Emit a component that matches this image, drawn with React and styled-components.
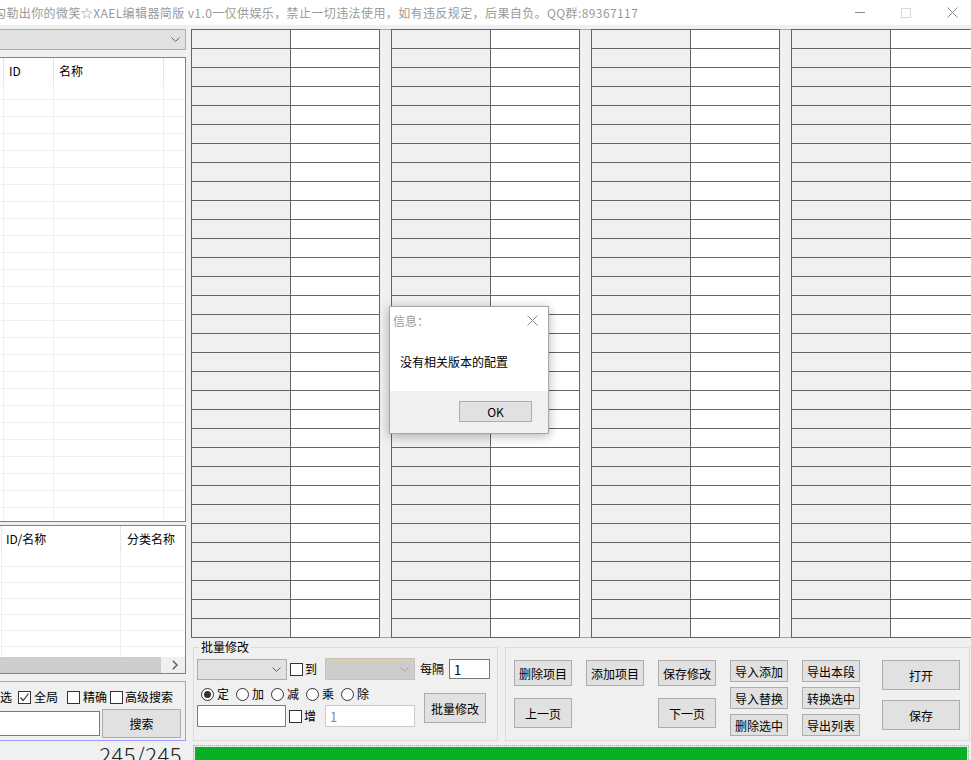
import styled, { createGlobalStyle } from 'styled-components';

const GlobalStyle = createGlobalStyle`
  html, body {
    margin: 0;
    padding: 0;
    background: #f0f0f0;
  }
  body {
    font-family: 'Noto Sans CJK SC', 'Microsoft YaHei', sans-serif;
    font-size: 12px;
    color: #000;
  }
  * { box-sizing: border-box; }
`;

const Window = styled.div`
  position: relative;
  width: 971px;
  height: 760px;
  overflow: hidden;
  background: #f0f0f0;
`;

const TitleBar = styled.div`
  height: 25px;
  background: #fff;
  display: flex;
  align-items: center;
`;

const TitleText = styled.div`
  margin-left: -6px;
  color: #9a9a9a;
  font-size: 12px;
  line-height: 25px;
  letter-spacing: 0.4px;
  white-space: nowrap;
`;

const Controls = styled.div`
  margin-left: auto;
  margin-right: -4px;
  display: flex;
`;

const CtrlBtn = styled.div`
  width: 46px;
  height: 25px;
  display: flex;
  align-items: center;
  justify-content: center;
`;

const Body = styled.div`
  display: flex;
  padding-top: 4px;
  height: 735px;
`;

const LeftCol = styled.div`
  width: 186px;
  flex-shrink: 0;
  margin-right: 5px;
  display: flex;
  flex-direction: column;
`;

const RightCol = styled.div`
  flex: 1;
  min-width: 0;
  display: flex;
  flex-direction: column;
`;

const Combo = styled.div`
  width: ${p => p.$w}px;
  height: ${p => p.$h || 21}px;
  flex-shrink: 0;
  background: ${p => (p.$disabled ? '#cccccc' : '#e1e1e1')};
  border: 1px solid ${p => (p.$disabled ? '#c4c4c4' : '#adadad')};
  ${p => p.$cut && 'border-left: none;'}
  margin-left: ${p => p.$ml || 0}px;
  display: flex;
  align-items: center;
  justify-content: flex-end;
  padding-right: 5px;
  ${p => p.$disabled && 'outline: 1px dotted #e2d3a8; outline-offset: -3px;'}
`;

const ListBox = styled.div`
  margin-top: ${p => p.$mt}px;
  height: ${p => p.$h}px;
  flex-shrink: 0;
  background: #fff;
  border: 1px solid #828282;
  border-left: none;
  overflow: hidden;
  display: flex;
  flex-direction: column;
`;

const ListHeader = styled.div`
  display: flex;
  height: ${p => p.$h}px;
  flex-shrink: 0;
`;

const HeadCell = styled.div`
  width: ${p => (p.$w ? `${p.$w}px` : 'auto')};
  flex: ${p => (p.$w ? '0 0 auto' : '1')};
  border-right: ${p => (p.$w ? '1px solid #e5e5e5' : 'none')};
  padding-left: ${p => p.$pl || 0}px;
  display: flex;
  align-items: center;
  white-space: nowrap;
  font-size: 12px;
`;

const ListRows = styled.div`
  flex: 1;
  overflow: hidden;
`;

const ListRow = styled.div`
  display: flex;
  height: ${p => p.$h}px;
  border-bottom: 1px solid #efefef;
`;

const ListCell = styled.div`
  width: ${p => (p.$w ? `${p.$w}px` : 'auto')};
  flex: ${p => (p.$w ? '0 0 auto' : '1')};
  border-right: ${p => (p.$w ? '1px solid #efefef' : 'none')};
`;

const HScroll = styled.div`
  height: 16px;
  flex-shrink: 0;
  display: flex;
  background: #f0f0f0;
`;

const Thumb = styled.div`
  flex: 1;
  background: #cdcdcd;
  outline: 1px dotted #e6d6a6;
  outline-offset: -4px;
`;

const ScrollArrow = styled.div`
  width: 24px;
  display: flex;
  align-items: center;
  justify-content: center;
  padding-left: 4px;
`;

const SearchGroup = styled.div`
  margin-top: 7px;
  height: 60px;
  flex-shrink: 0;
  border: 1px solid #9a9aff;
  border-left: none;
  padding-top: 8px;
`;

const Line = styled.div`
  display: flex;
  align-items: center;
  height: ${p => p.$h}px;
  margin-top: ${p => p.$mt || 0}px;
  padding-left: ${p => p.$pl || 0}px;
  gap: ${p => p.$gap || 0}px;
`;

const Label = styled.span`
  margin-left: ${p => p.$ml || 0}px;
  line-height: 14px;
  white-space: nowrap;
  font-size: 12px;
`;

const CheckItem = styled.label`
  display: flex;
  align-items: center;
  gap: ${p => p.$gap ?? 3}px;
  margin-left: ${p => p.$ml || 0}px;
  white-space: nowrap;
  line-height: 14px;
`;

const Box = styled.span`
  width: 13px;
  height: 13px;
  border: 1px solid #333;
  background: #fff;
  display: inline-flex;
  align-items: center;
  justify-content: center;
`;

const RadioItem = styled.label`
  display: flex;
  align-items: center;
  gap: 3px;
  line-height: 14px;
`;

const RadioCircle = styled.span`
  width: 13px;
  height: 13px;
  border: 1px solid #333;
  border-radius: 50%;
  background: #fff;
  display: inline-flex;
  align-items: center;
  justify-content: center;
  &::after {
    content: '';
    width: 7px;
    height: 7px;
    border-radius: 50%;
    background: ${p => (p.$on ? '#333' : 'transparent')};
  }
`;

const TextInput = styled.div`
  width: ${p => p.$w}px;
  height: ${p => p.$h}px;
  flex-shrink: 0;
  margin-left: ${p => p.$ml || 0}px;
  background: #fff;
  border: 1px solid ${p => (p.$disabled ? '#cccccc' : '#7a7a7a')};
  ${p => p.$cut && 'border-left: none;'}
  color: ${p => (p.$disabled ? '#8a8a8a' : '#000')};
  font-size: 13px;
  padding-left: 4px;
  display: flex;
  align-items: center;
`;

const Btn = styled.div`
  width: ${p => p.$w}px;
  height: ${p => p.$h}px;
  flex-shrink: 0;
  margin-left: ${p => p.$ml || 0}px;
  margin-top: ${p => p.$mt || 0}px;
  background: #e1e1e1;
  border: 1px solid #adadad;
  display: flex;
  align-items: center;
  justify-content: center;
  font-size: 12px;
  white-space: nowrap;
`;

const Count = styled.div`
  text-align: right;
  padding-right: 4px;
  font-size: 22px;
  font-weight: 300;
  line-height: 26px;
  color: #222;
  letter-spacing: 0.5px;
`;

const GridArea = styled.div`
  display: flex;
  height: 609px;
  flex-shrink: 0;
  overflow: hidden;
`;

const Block = styled.div`
  width: 189px;
  flex-shrink: 0;
  border-left: 1px solid #646464;
  border-top: 1px solid #646464;
`;

const GridRow = styled.div`
  display: flex;
  height: 19px;
`;

const GridCell = styled.div`
  width: ${p => p.$w}px;
  flex-shrink: 0;
  background: ${p => (p.$grey ? '#f0f0f0' : '#fff')};
  border-right: 1px solid #646464;
  border-bottom: 1px solid #646464;
`;

const Splitter = styled.div`
  width: 11px;
  flex-shrink: 0;
  border-top: 1px solid #9a9aff;
  border-bottom: 1px solid #9a9aff;
`;

const BottomRow = styled.div`
  display: flex;
  margin-top: 9px;
  height: 94px;
  flex-shrink: 0;
`;

const Group = styled.div`
  position: relative;
  width: 305px;
  margin-left: 2px;
  border: 1px solid #dcdcdc;
  padding: 10px 0 0 3px;
`;

const GroupTitle = styled.span`
  position: absolute;
  top: -8px;
  left: 5px;
  padding: 0 2px;
  background: #f0f0f0;
  font-size: 12px;
  line-height: 14px;
`;

const BatchLower = styled.div`
  display: flex;
  margin-top: 6px;
`;

const BatchLeft = styled.div`
  display: flex;
  flex-direction: column;
  width: 218px;
`;

const ButtonPanel = styled.div`
  width: 465px;
  margin-left: 7px;
  border: 1px solid #dcdcdc;
  padding: 12px 0 0 8px;
  display: flex;
  gap: 14px;
`;

const BtnCol = styled.div`
  display: flex;
  flex-direction: column;
  gap: ${p => p.$gap}px;
  margin-left: ${p => p.$ml || 0}px;
`;

const Progress = styled.div`
  margin-top: 4px;
  margin-left: 2px;
  width: 776px;
  height: 20px;
  border: 1px dotted #a8a8a8;
  border-bottom: none;
  background: #e6e6e6;
  padding: 1px 1px 0 1px;
`;

const ProgressFill = styled.div`
  height: 100%;
  background: #06b025;
`;

const Dialog = styled.div`
  position: absolute;
  left: 389px;
  top: 306px;
  width: 160px;
  height: 128px;
  background: #fff;
  border: 1px solid #a6a6a6;
  box-shadow: 0 2px 10px rgba(0, 0, 0, 0.3);
  display: flex;
  flex-direction: column;
`;

const DialogTitle = styled.div`
  height: 26px;
  display: flex;
  align-items: center;
  justify-content: space-between;
  padding: 0 10px 0 3px;
  color: #9a9a9a;
  font-size: 12px;
`;

const DialogMsg = styled.div`
  flex: 1;
  display: flex;
  align-items: center;
  padding: 0 0 2px 10px;
  font-size: 12px;
`;

const DialogFooter = styled.div`
  height: 42px;
  background: #f0f0f0;
  display: flex;
  justify-content: flex-end;
  padding: 10px 16px 0 0;
`;

const Chevron = ({ color = '#606060' }) => (
  <svg width="9" height="5" viewBox="0 0 9 5">
    <path d="M0.5 0.5 L4.5 4.5 L8.5 0.5" fill="none" stroke={color} strokeWidth="1" />
  </svg>
);

const Check = ({ on, children, ml, gap }) => (
  <CheckItem $ml={ml} $gap={gap}>
    <Box>
      {on && (
        <svg width="11" height="11" viewBox="0 0 11 11">
          <path d="M1.5 5.5 L4.2 8.5 L9.5 1.5" fill="none" stroke="#333" strokeWidth="1.2" />
        </svg>
      )}
    </Box>
    {children}
  </CheckItem>
);

const range = n => Array.from({ length: n }, (_, i) => i);

const titleText =
  '勾勒出你的微笑☆XAEL编辑器简版 v1.0一仅供娱乐，禁止一切违法使用，如有违反规定，后果自负。QQ群:89367117';

function DataBlock() {
  return (
    <Block>
      {range(32).map(i => (
        <GridRow key={i}>
          <GridCell $w={99} $grey />
          <GridCell $w={89} />
        </GridRow>
      ))}
    </Block>
  );
}

export default function App() {
  return (
    <Window>
      <GlobalStyle />
      <TitleBar>
        <TitleText>{titleText}</TitleText>
        <Controls>
          <CtrlBtn>
            <svg width="10" height="1" viewBox="0 0 10 1">
              <rect width="10" height="1" fill="#8a8a8a" />
            </svg>
          </CtrlBtn>
          <CtrlBtn>
            <svg width="10" height="10" viewBox="0 0 10 10">
              <rect x="0.5" y="0.5" width="9" height="9" fill="none" stroke="#dadada" />
            </svg>
          </CtrlBtn>
          <CtrlBtn>
            <svg width="11" height="11" viewBox="0 0 11 11">
              <path d="M0.5 0.5 L10.5 10.5 M10.5 0.5 L0.5 10.5" stroke="#8a8a8a" strokeWidth="1" />
            </svg>
          </CtrlBtn>
        </Controls>
      </TitleBar>

      <Body>
        <LeftCol>
          <Combo $w={186} $cut>
            <Chevron />
          </Combo>

          <ListBox $mt={7} $h={465}>
            <ListHeader $h={25}>
              <HeadCell $w={4} />
              <HeadCell $w={50} $pl={5}>ID</HeadCell>
              <HeadCell $w={110} $pl={5}>名称</HeadCell>
              <HeadCell />
            </ListHeader>
            <ListRows>
              {range(27).map(i => (
                <ListRow key={i} $h={17}>
                  <ListCell $w={4} />
                  <ListCell $w={50} />
                  <ListCell $w={110} />
                  <ListCell />
                </ListRow>
              ))}
            </ListRows>
          </ListBox>

          <ListBox $mt={3} $h={149}>
            <ListHeader $h={25}>
              <HeadCell $w={2} />
              <HeadCell $w={119} $pl={4}>ID/名称</HeadCell>
              <HeadCell $pl={6}>分类名称</HeadCell>
            </ListHeader>
            <ListRows>
              {range(7).map(i => (
                <ListRow key={i} $h={16}>
                  <ListCell $w={2} />
                  <ListCell $w={119} />
                  <ListCell />
                </ListRow>
              ))}
            </ListRows>
            <HScroll>
              <Thumb />
              <ScrollArrow>
                <svg width="6" height="10" viewBox="0 0 6 10">
                  <path d="M0.8 0.8 L5 5 L0.8 9.2" fill="none" stroke="#606060" strokeWidth="1.5" />
                </svg>
              </ScrollArrow>
            </HScroll>
          </ListBox>

          <SearchGroup>
            <Line $h={14}>
              <Label>选</Label>
              <Check on ml={6}>全局</Check>
              <Check ml={9}>精确</Check>
              <Check ml={3} gap={2}>高级搜索</Check>
            </Line>
            <Line $h={29} $mt={5}>
              <TextInput $w={100} $h={25} $cut />
              <Btn $w={79} $h={29} $ml={2}>搜索</Btn>
            </Line>
          </SearchGroup>

          <Count>245/245</Count>
        </LeftCol>

        <RightCol>
          <GridArea>
            <DataBlock />
            <Splitter />
            <DataBlock />
            <Splitter />
            <DataBlock />
            <Splitter />
            <DataBlock />
          </GridArea>

          <BottomRow>
            <Group>
              <GroupTitle>批量修改</GroupTitle>
              <Line $h={22}>
                <Combo $w={90} $h={21}>
                  <Chevron />
                </Combo>
                <Check ml={3} gap={2}>到</Check>
                <Combo $w={90} $h={22} $ml={8} $disabled>
                  <Chevron color="#a0a0a0" />
                </Combo>
                <Label $ml={5}>每隔</Label>
                <TextInput $w={41} $h={20} $ml={5}>1</TextInput>
              </Line>
              <BatchLower>
                <BatchLeft>
                  <Line $h={16} $pl={4} $gap={7}>
                    <RadioItem><RadioCircle $on />定</RadioItem>
                    <RadioItem><RadioCircle />加</RadioItem>
                    <RadioItem><RadioCircle />减</RadioItem>
                    <RadioItem><RadioCircle />乘</RadioItem>
                    <RadioItem><RadioCircle />除</RadioItem>
                  </Line>
                  <Line $h={22} $mt={3}>
                    <TextInput $w={89} $h={22} />
                    <Check ml={3} gap={2}>增</Check>
                    <TextInput $w={90} $h={22} $ml={9} $disabled>1</TextInput>
                  </Line>
                </BatchLeft>
                <Btn $w={62} $h={30} $ml={9} $mt={7}>批量修改</Btn>
              </BatchLower>
            </Group>

            <ButtonPanel>
              <BtnCol $gap={12}>
                <Btn $w={58} $h={26}>删除项目</Btn>
                <Btn $w={58} $h={30}>上一页</Btn>
              </BtnCol>
              <BtnCol $gap={12}>
                <Btn $w={58} $h={26}>添加项目</Btn>
              </BtnCol>
              <BtnCol $gap={12}>
                <Btn $w={58} $h={26}>保存修改</Btn>
                <Btn $w={58} $h={30}>下一页</Btn>
              </BtnCol>
              <BtnCol $gap={5}>
                <Btn $w={58} $h={22}>导入添加</Btn>
                <Btn $w={58} $h={22}>导入替换</Btn>
                <Btn $w={58} $h={22}>删除选中</Btn>
              </BtnCol>
              <BtnCol $gap={5}>
                <Btn $w={58} $h={22}>导出本段</Btn>
                <Btn $w={58} $h={22}>转换选中</Btn>
                <Btn $w={58} $h={22}>导出列表</Btn>
              </BtnCol>
              <BtnCol $gap={10} $ml={8}>
                <Btn $w={78} $h={30}>打开</Btn>
                <Btn $w={78} $h={30}>保存</Btn>
              </BtnCol>
            </ButtonPanel>
          </BottomRow>

          <Progress>
            <ProgressFill />
          </Progress>
        </RightCol>
      </Body>

      <Dialog>
        <DialogTitle>
          <span>信息：</span>
          <svg width="11" height="11" viewBox="0 0 11 11">
            <path d="M0.5 0.5 L10.5 10.5 M10.5 0.5 L0.5 10.5" stroke="#8a8a8a" strokeWidth="1" />
          </svg>
        </DialogTitle>
        <DialogMsg>没有相关版本的配置</DialogMsg>
        <DialogFooter>
          <Btn $w={73} $h={21}>OK</Btn>
        </DialogFooter>
      </Dialog>
    </Window>
  );
}
